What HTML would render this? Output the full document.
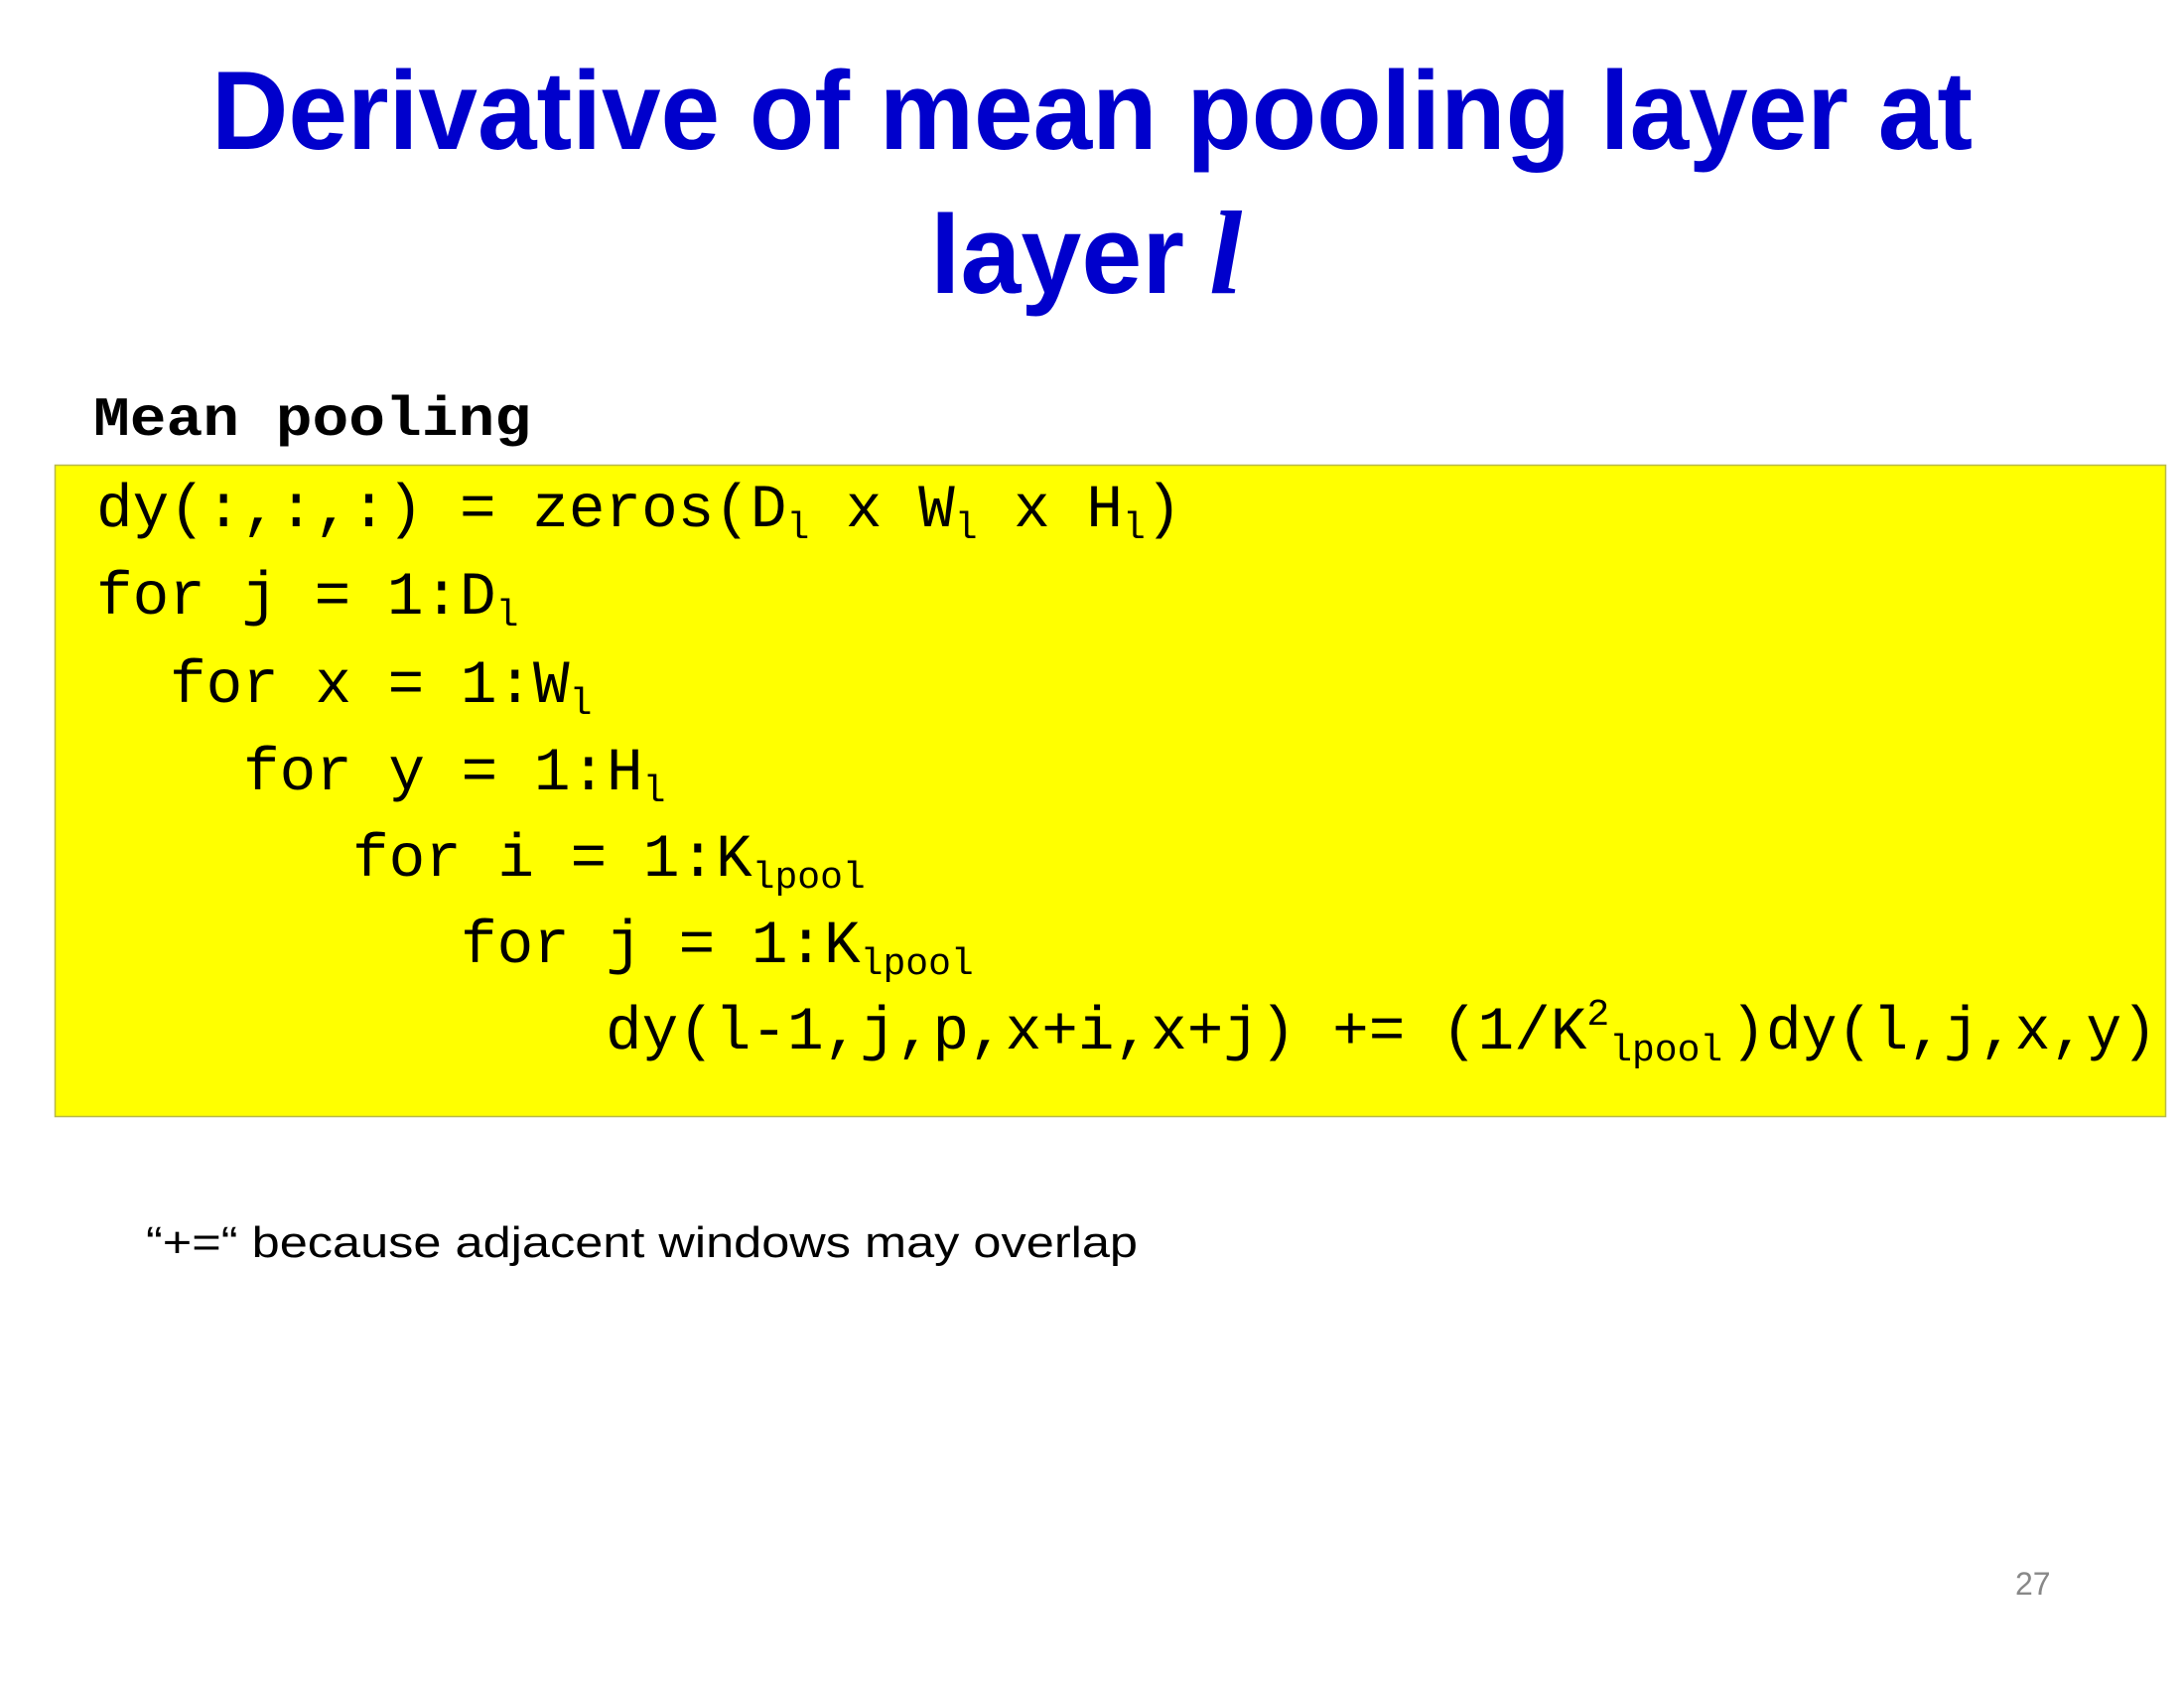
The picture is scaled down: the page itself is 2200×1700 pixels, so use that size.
<!DOCTYPE html>
<html><head><meta charset="utf-8"><style>html,body{margin:0;padding:0;background:#fff}svg{display:block}</style></head>
<body>
<svg width="2200" height="1700" viewBox="0 0 2200 1700" xmlns="http://www.w3.org/2000/svg">
<rect width="2200" height="1700" fill="#fff"/>
<g font-family="Liberation Sans, sans-serif" font-weight="bold" fill="#0000cc" font-size="112">
<text x="213" y="150" textLength="1774" lengthAdjust="spacingAndGlyphs">Derivative of mean pooling layer at</text>
<text x="937" y="295" textLength="256" lengthAdjust="spacingAndGlyphs">layer</text>
<text x="1218" y="295" font-family="Liberation Serif, serif" font-style="italic" font-size="120">l</text>
</g>
<text x="94" y="438" font-family="Liberation Mono, monospace" font-weight="bold" font-size="56" textLength="441" lengthAdjust="spacingAndGlyphs">Mean pooling</text>
<rect x="55.5" y="468.5" width="2126" height="656" fill="#ffff00" stroke="#b8b84a" stroke-width="1.5"/>
<g font-family="Liberation Mono, monospace" font-size="61" fill="#000">
<text x="97" y="530">dy(:,:,:) = zeros(D<tspan font-size="38" dy="12">l</tspan><tspan dy="-12"> x W</tspan><tspan font-size="38" dy="12">l</tspan><tspan dy="-12"> x H</tspan><tspan font-size="38" dy="12">l</tspan><tspan dy="-12">)</tspan></text>
<text x="97" y="618">for j = 1:D<tspan font-size="38" dy="12">l</tspan></text>
<text x="171" y="707">for x = 1:W<tspan font-size="38" dy="12">l</tspan></text>
<text x="245" y="795">for y = 1:H<tspan font-size="38" dy="12">l</tspan></text>
<text x="355" y="882">for i = 1:K<tspan font-size="38" dy="12">lpool</tspan></text>
<text x="464" y="969">for j = 1:K<tspan font-size="38" dy="12">lpool</tspan></text>
<text x="610" y="1056">dy(l-1,j,p,x+i,x+j) += (1/K<tspan font-size="38" dy="-24">2</tspan><tspan font-size="38" dy="36">lpool</tspan></text>
<text x="1743" y="1056" textLength="430" lengthAdjust="spacingAndGlyphs">)dy(l,j,x,y)</text>
</g>
<text x="147" y="1266" font-family="Liberation Sans, sans-serif" font-size="44" fill="#000" textLength="999" lengthAdjust="spacingAndGlyphs">“+=“ because adjacent windows may overlap</text>
<text x="2030" y="1606" font-family="Liberation Sans, sans-serif" font-size="32" fill="#888">27</text>
</svg>
</body></html>
